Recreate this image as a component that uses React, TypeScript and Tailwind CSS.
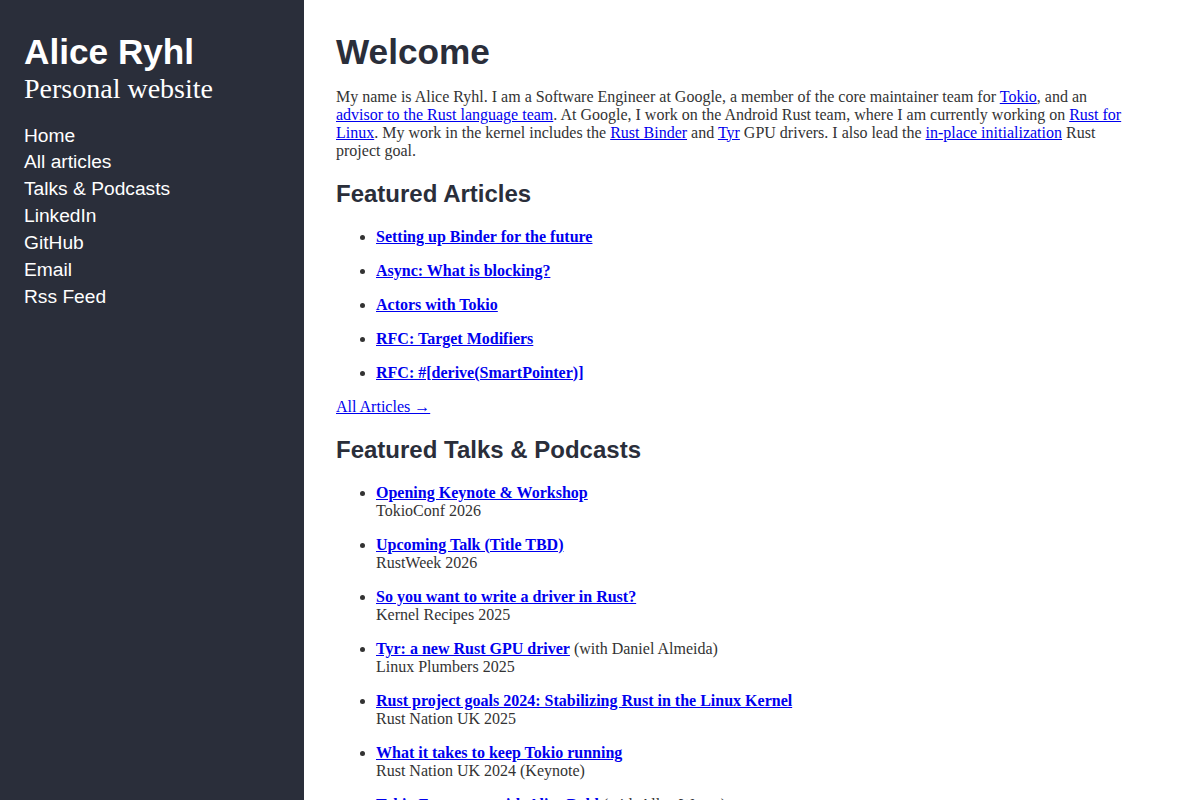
import React from "react";

const navLinks = ["Home", "All articles", "Talks & Podcasts", "LinkedIn", "GitHub", "Email", "Rss Feed"];

const articles = [
  "Setting up Binder for the future",
  "Async: What is blocking?",
  "Actors with Tokio",
  "RFC: Target Modifiers",
  "RFC: #[derive(SmartPointer)]",
];

const talks = [
  { title: "Opening Keynote & Workshop", event: "TokioConf 2026" },
  { title: "Upcoming Talk (Title TBD)", event: "RustWeek 2026" },
  { title: "So you want to write a driver in Rust?", event: "Kernel Recipes 2025" },
  { title: "Tyr: a new Rust GPU driver", extra: " (with Daniel Almeida)", event: "Linux Plumbers 2025" },
  { title: "Rust project goals 2024: Stabilizing Rust in the Linux Kernel", event: "Rust Nation UK 2025" },
  { title: "What it takes to keep Tokio running", event: "Rust Nation UK 2024 (Keynote)" },
  { title: "Tokio Ecosystem with Alice Ryhl", extra: " (with Allen Wyma)", event: "Rustacean Station" },
];

const Link = ({ children, bold }: { children: React.ReactNode; bold?: boolean }) => (
  <a href="#" className={`text-[#0000ee] underline ${bold ? "font-bold" : ""}`}>
    {children}
  </a>
);

export default function App() {
  return (
    <div className="flex min-h-screen bg-white">
      {/* Sidebar */}
      <aside className="w-[304px] shrink-0 bg-[#2a2e3a] px-6 pt-8 text-white">
        <h1 className="font-['Liberation_Sans',sans-serif] text-[35.2px] font-bold leading-[40.5px]">Alice Ryhl</h1>
        <div className="font-['Liberation_Serif',serif] text-[28px] leading-[31px]">Personal website</div>
        <nav className="mt-[19px] flex flex-col font-['Liberation_Sans',sans-serif] text-[19.2px] leading-[26.9px]">
          {navLinks.map((l) => (
            <a key={l} href="#" className="text-white">
              {l}
            </a>
          ))}
        </nav>
      </aside>

      {/* Main */}
      <main className="h-screen flex-1 overflow-hidden pl-8 pt-8 font-['Liberation_Serif',serif] text-[16px] leading-[18px] text-[#333333]">
        <div className="max-w-[800px]">
          <h1 className="mb-[15px] font-['Liberation_Sans',sans-serif] text-[35.2px] font-bold leading-[40.5px] text-[#2a2e3a]">
            Welcome
          </h1>
          <p>
            My name is Alice Ryhl. I am a Software Engineer at Google, a member of the core maintainer team for{" "}
            <Link>Tokio</Link>, and an <Link>advisor to the Rust language team</Link>. At Google, I work on the Android
            Rust team, where I am currently working on <Link>Rust for Linux</Link>. My work in the kernel includes the{" "}
            <Link>Rust Binder</Link> and <Link>Tyr</Link> GPU drivers. I also lead the{" "}
            <Link>in-place initialization</Link> Rust project goal.
          </p>

          <h2 className="my-5 font-['Liberation_Sans',sans-serif] text-[24px] font-bold leading-[28px] text-[#2a2e3a]">
            Featured Articles
          </h2>
          <ul className="flex list-disc flex-col gap-4 pl-10">
            {articles.map((a) => (
              <li key={a}>
                <Link bold>{a}</Link>
              </li>
            ))}
          </ul>
          <p className="mt-4">
            <Link>All Articles →</Link>
          </p>

          <h2 className="my-5 font-['Liberation_Sans',sans-serif] text-[24px] font-bold leading-[28px] text-[#2a2e3a]">
            Featured Talks &amp; Podcasts
          </h2>
          <ul className="flex list-disc flex-col gap-4 pl-10">
            {talks.map((t) => (
              <li key={t.title}>
                <Link bold>{t.title}</Link>
                {t.extra}
                <br />
                {t.event}
              </li>
            ))}
          </ul>
        </div>
      </main>
    </div>
  );
}
